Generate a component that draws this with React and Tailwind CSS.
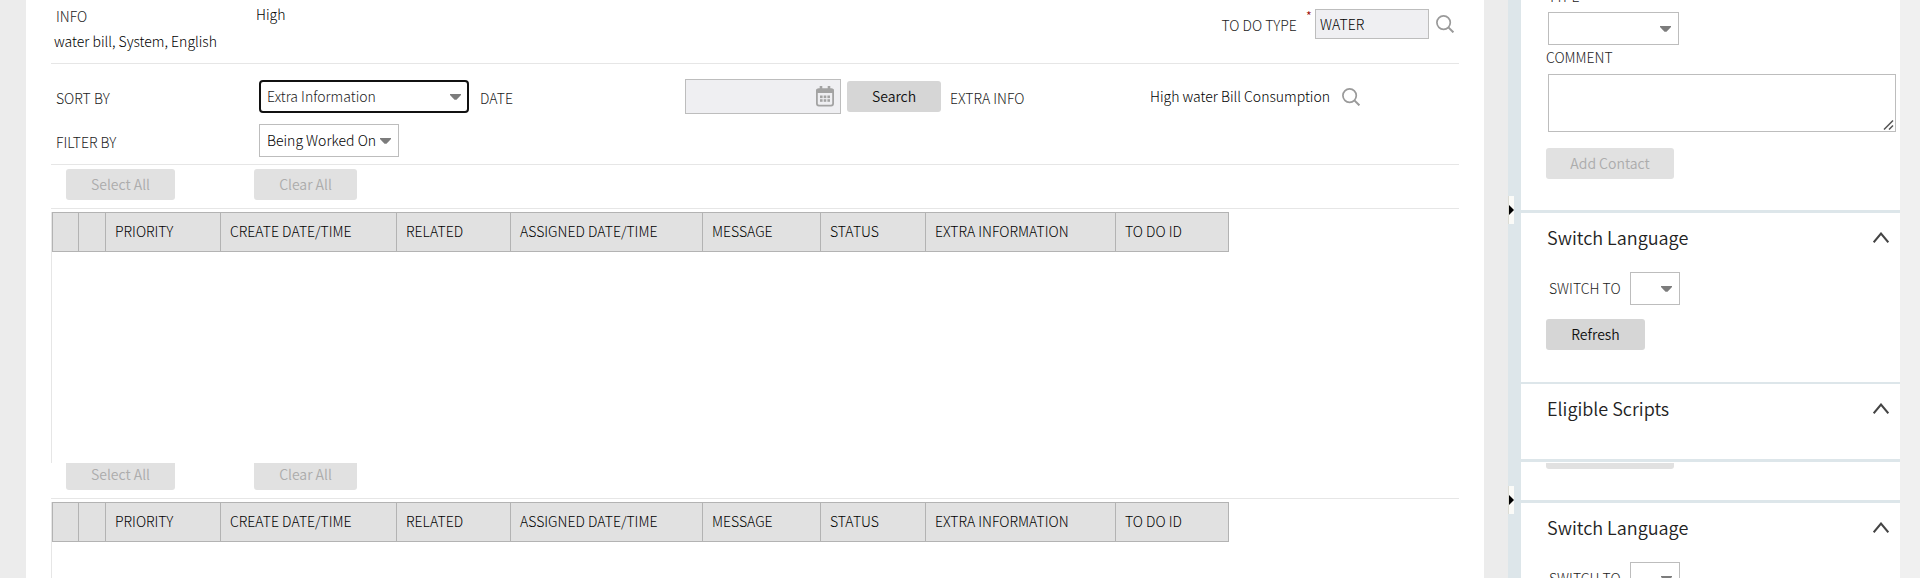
import React from "react";

const COLUMNS = [
  { label: "", width: "w-[26px]" },
  { label: "", width: "w-[27px]" },
  { label: "PRIORITY", width: "w-[115px]" },
  { label: "CREATE DATE/TIME", width: "w-[176px]" },
  { label: "RELATED", width: "w-[114px]" },
  { label: "ASSIGNED DATE/TIME", width: "w-[192px]" },
  { label: "MESSAGE", width: "w-[118px]" },
  { label: "STATUS", width: "w-[105px]" },
  { label: "EXTRA INFORMATION", width: "w-[190px]" },
  { label: "TO DO ID", width: "w-[113px]" },
];

function Select({ id, label, value, boxClass }) {
  return (
    <div className="relative flex w-fit">
      <select
        id={id}
        aria-label={label}
        className={`h-[33px] appearance-none bg-white pb-px outline-none ${boxClass}`}
      >
        <option>{value}</option>
      </select>
      <svg
        className="pointer-events-none absolute right-2 top-[14px]"
        width="11"
        height="6"
        viewBox="0 0 11 6"
        aria-hidden="true"
      >
        <path d="M0 0h11v1L6.500 5.700h-2L0 1z" fill="#7c7c7c" />
      </svg>
    </div>
  );
}

function SearchIcon({ label }) {
  return (
    <button type="button" aria-label={label} className="block">
      <svg width="18" height="18" viewBox="0 0 18 18" fill="none" stroke="#9a9a9a" aria-hidden="true">
        <circle cx="7.6" cy="7.6" r="6.7" strokeWidth="1.7" />
        <path d="M12.4 12.4l5 5" strokeWidth="2" />
      </svg>
    </button>
  );
}

function CalendarIcon() {
  return (
    <svg width="18" height="21" viewBox="0 0 18 21" aria-hidden="true">
      <rect x="0.9" y="3.4" width="16.2" height="16.2" rx="2" fill="#efeff2" stroke="#a3a3a3" strokeWidth="1.8" />
      <path d="M0 7V4.500Q0 2.500 2 2.500H16Q18 2.500 18 4.500V7z" fill="#a3a3a3" />
      <path d="M5 0v4M13 0v4" stroke="#a3a3a3" strokeWidth="2.600" />
      <g fill="#a3a3a3">
        <rect x="4" y="9.500" width="2.600" height="2.600" />
        <rect x="7.700" y="9.500" width="2.600" height="2.600" />
        <rect x="11.400" y="9.500" width="2.600" height="2.600" />
        <rect x="4" y="13.200" width="2.600" height="2.600" />
        <rect x="7.700" y="13.200" width="2.600" height="2.600" />
        <rect x="11.400" y="13.200" width="2.600" height="2.600" />
      </g>
    </svg>
  );
}

function Button({ children, disabled, widthClass }) {
  return (
    <button
      type="button"
      disabled={disabled}
      className={`h-[31px] shrink-0 rounded-[3px] pb-[2px] ${widthClass} ${
        disabled ? "bg-[#e1e1e1] font-[350] text-[#acacac]" : "bg-[#d6d6d6] font-[350] text-[#111]"
      }`}
    >
      {children}
    </button>
  );
}

function SelectionButtons() {
  return (
    <>
      <Button disabled widthClass="w-[109px]">Select All</Button>
      <Button disabled widthClass="ml-[79px] w-[103px]">Clear All</Button>
    </>
  );
}

function ToDoTable() {
  return (
    <table className="table-fixed border-collapse">
      <thead>
        <tr className="h-[39px] bg-[#e1e1e1]">
          {COLUMNS.map((column, index) => (
            <th
              key={index}
              scope="col"
              className={`border border-[#b3b3b3] p-0 text-left font-light text-black ${column.width}`}
            >
              {column.label && <span className="block whitespace-nowrap pb-[2px] pl-[9px]">{column.label}</span>}
            </th>
          ))}
        </tr>
      </thead>
    </table>
  );
}

function SectionTitle({ children }) {
  return (
    <div className="flex h-[49px] items-center justify-between pl-[26px] pr-[11px]">
      <h2 className="pb-px text-[18px] font-[350] leading-6 text-[#222]">{children}</h2>
      <button type="button" aria-label={`Collapse ${children}`}>
        <svg width="16" height="11" viewBox="0 0 16 11" fill="none" stroke="#444" strokeWidth="2" aria-hidden="true">
          <path d="M0.700 10.300L8 1.500l7.300 8.800" />
        </svg>
      </button>
    </div>
  );
}

function SwitchTo({ id }) {
  return (
    <div className="flex h-[33px] items-center pl-[28px]">
      <label htmlFor={id} className="w-[81px] pb-[2px]">SWITCH TO</label>
      <Select id={id} boxClass="w-[50px] border border-[#bdbdbd]" value="" />
    </div>
  );
}

function Handle({ label }) {
  return (
    <button type="button" aria-label={label} className="block h-7 w-[6px] border-l border-[#dcdcd4] bg-[#fbfbf8]">
      <svg width="5" height="10" viewBox="0 0 5 10" aria-hidden="true">
        <path d="M0 0L5 5L0 10z" fill="#000" />
      </svg>
    </button>
  );
}

export default function App() {
  return (
    <div className="flex h-screen w-full overflow-hidden bg-[#ececec] font-['Noto_Sans_CJK_SC',sans-serif] text-[14px] font-light leading-5 text-[#222]">
      <main className="ml-[26px] min-w-0 flex-1 bg-white px-[25px]">
        <section className="flex h-16 items-start border-b border-[#e6e6e6]">
          <div className="w-[205px] pt-[6px]">
            <p className="pl-[5px]">INFO</p>
            <p className="mt-[5px] whitespace-nowrap pl-[3px] text-black">water bill, System, English</p>
          </div>
          <p className="pt-1 text-black">High</p>
          <div className="ml-auto flex items-start pr-[5px]">
            <label htmlFor="todo-type" className="pt-[15px]">TO DO TYPE</label>
            <span className="pl-[9px] pr-[3px] pt-[6px] text-[#900]">*</span>
            <input
              id="todo-type"
              defaultValue="WATER"
              className="mt-[9px] h-[30px] w-[114px] border border-[#bdbdbd] bg-[#efeff2] px-1 text-black outline-none"
            />
            <div className="pl-[7px] pt-[15px]">
              <SearchIcon label="Search to do type" />
            </div>
          </div>
        </section>

        <section className="h-[101px] border-b border-[#e6e6e6] pt-[15px]">
          <div className="flex h-[35px] items-center whitespace-nowrap">
            <label htmlFor="sort-by" className="w-[208px] pl-[5px] pt-[2px]">SORT BY</label>
            <Select
              id="sort-by"
              boxClass="w-[210px] rounded-[4px] border-2 border-[#111] pl-[6px] text-[#222]"
              value="Extra Information"
            />
            <label htmlFor="date" className="w-[216px] pl-[11px] pt-[2px]">DATE</label>
            <div className="flex h-[35px] w-[156px] items-center border border-[#bdbdbd] bg-[#efeff2] pr-[6px]">
              <input id="date" className="h-full min-w-0 flex-1 px-1 outline-none" />
              <CalendarIcon />
            </div>
            <div className="flex pl-[6px]">
              <Button widthClass="w-[94px]">Search</Button>
            </div>
            <p className="w-[209px] pl-[9px] pt-[2px]">EXTRA INFO</p>
            <p className="pb-px text-black">High water Bill Consumption</p>
            <div className="pl-3">
              <SearchIcon label="Search extra info" />
            </div>
          </div>
          <div className="mt-[10px] flex h-[33px] items-center">
            <label htmlFor="filter-by" className="w-[208px] pl-[5px] pt-[2px]">FILTER BY</label>
            <Select
              id="filter-by"
              boxClass="w-[140px] border border-[#bdbdbd] pl-[7px] text-black"
              value="Being Worked On"
            />
          </div>
        </section>

        <div className="flex h-11 items-start border-b border-[#e6e6e6] pl-[15px] pt-1">
          <SelectionButtons />
        </div>
        <div className="mt-[3px] h-[251px] border-l border-[#e6e6e6]">
          <ToDoTable />
        </div>

        <div className="h-9 border-b border-[#e6e6e6] pl-[15px]">
          <div className="flex h-[27px] items-end overflow-hidden">
            <SelectionButtons />
          </div>
        </div>
        <div className="mt-[3px] h-[251px] border-l border-[#e6e6e6]">
          <ToDoTable />
        </div>
      </main>

      <div className="ml-6 flex w-[13px] shrink-0 flex-col gap-[262px] bg-[#dde6ea] pt-[196px]">
        <Handle label="Collapse dashboard" />
        <Handle label="Collapse lower dashboard" />
      </div>

      <aside className="w-[379px] shrink-0 bg-white">
        <section className="h-[213px] border-b-[3px] border-[#dde6ea] pl-[25px] pr-1">
          <div className="flex h-3 items-end overflow-hidden pb-[6px]">
            <label htmlFor="contact-type" className="pl-[2px]">TYPE</label>
          </div>
          <div className="pl-[2px]">
            <Select id="contact-type" boxClass="w-[131px] border border-[#bdbdbd]" value="" />
          </div>
          <label htmlFor="comment" className="mt-[2px] block">COMMENT</label>
          <div className="relative ml-[2px] mt-[7px]">
            <textarea id="comment" className="block h-[58px] w-full resize-none border border-[#bdbdbd] outline-none" />
            <svg
              className="pointer-events-none absolute bottom-[2px] right-[2px]"
              width="11"
              height="10"
              viewBox="0 0 11 10"
              fill="none"
              stroke="#555"
              strokeWidth="1.500"
              aria-hidden="true"
            >
              <path d="M1 9.500L10 0.500M6 9.500L10 5.500" />
            </svg>
          </div>
          <div className="mt-4 flex">
            <Button disabled widthClass="w-[128px]">Add Contact</Button>
          </div>
        </section>

        <section className="h-[171px] border-b-2 border-[#dde6ea]">
          <SectionTitle>Switch Language</SectionTitle>
          <div className="mt-[10px]">
            <SwitchTo id="switch-to" />
          </div>
          <div className="mt-[14px] flex pl-[25px]">
            <Button widthClass="w-[99px]">Refresh</Button>
          </div>
        </section>

        <section className="h-[78px] border-b-[3px] border-[#dde6ea]">
          <SectionTitle>Eligible Scripts</SectionTitle>
        </section>

        <section className="h-[41px] border-b-[3px] border-[#dde6ea] pl-[25px] pt-px">
          <div className="flex h-[6px] items-end overflow-hidden">
            <Button disabled widthClass="w-[128px]">Add Contact</Button>
          </div>
        </section>

        <section>
          <SectionTitle>Switch Language</SectionTitle>
          <div className="mt-[10px]">
            <SwitchTo id="switch-to-lower" />
          </div>
        </section>
      </aside>
      <div className="w-5 shrink-0 bg-[#f0f0f0]" />
    </div>
  );
}
